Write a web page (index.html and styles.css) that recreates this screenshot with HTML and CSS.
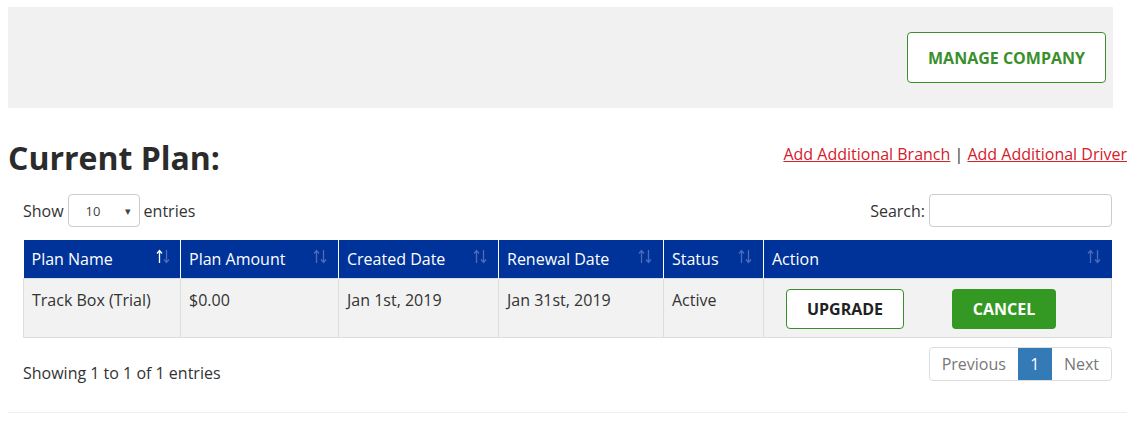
FILE: index.html
```html
<!DOCTYPE html>
<html>
<head>
    <title>Current Plan</title>
    <meta charset="utf-8">
    <meta name="viewport" content="width=device-width, initial-scale=1">
    <link rel="stylesheet" href="styles.css">
</head>
<body>
<div class="page">
    <div class="top-bar">
        <a class="btn-outline-green" href="#">Manage Company</a>
    </div>

    <div class="plan-head">
        <h2>Current Plan:</h2>
        <div class="plan-links">
            <a href="#">Add Additional Branch</a> | <a href="#">Add Additional Driver</a>
        </div>
    </div>

    <div class="table-wrap">
        <div class="table-controls">
            <label class="length">Show
                <span class="select-box">10<span class="caret">&#9662;</span></span>
                entries</label>
            <label class="search">Search: <input type="search"></label>
        </div>

        <table class="plans">
            <thead>
            <tr>
                <th class="col-name sorted">Plan Name
                    <svg class="sort" viewBox="0 0 14 15"><path class="up" d="M3.5 1.5V14M1 4.5l2.5-3 2.5 3"/><path class="down" d="M10.5 1V13.5M8 10.5l2.5 3 2.5-3"/></svg>
                </th>
                <th class="col-amount">Plan Amount
                    <svg class="sort" viewBox="0 0 14 15"><path class="up" d="M3.5 1.5V14M1 4.5l2.5-3 2.5 3"/><path class="down" d="M10.5 1V13.5M8 10.5l2.5 3 2.5-3"/></svg>
                </th>
                <th class="col-created">Created Date
                    <svg class="sort" viewBox="0 0 14 15"><path class="up" d="M3.5 1.5V14M1 4.5l2.5-3 2.5 3"/><path class="down" d="M10.5 1V13.5M8 10.5l2.5 3 2.5-3"/></svg>
                </th>
                <th class="col-renewal">Renewal Date
                    <svg class="sort" viewBox="0 0 14 15"><path class="up" d="M3.5 1.5V14M1 4.5l2.5-3 2.5 3"/><path class="down" d="M10.5 1V13.5M8 10.5l2.5 3 2.5-3"/></svg>
                </th>
                <th class="col-status">Status
                    <svg class="sort" viewBox="0 0 14 15"><path class="up" d="M3.5 1.5V14M1 4.5l2.5-3 2.5 3"/><path class="down" d="M10.5 1V13.5M8 10.5l2.5 3 2.5-3"/></svg>
                </th>
                <th class="col-action">Action
                    <svg class="sort" viewBox="0 0 14 15"><path class="up" d="M3.5 1.5V14M1 4.5l2.5-3 2.5 3"/><path class="down" d="M10.5 1V13.5M8 10.5l2.5 3 2.5-3"/></svg>
                </th>
            </tr>
            </thead>
            <tbody>
            <tr>
                <td>Track Box (Trial)</td>
                <td>$0.00</td>
                <td>Jan 1st, 2019</td>
                <td>Jan 31st, 2019</td>
                <td>Active</td>
                <td class="actions">
                    <div class="action-btns">
                        <a class="btn-upgrade" href="#">Upgrade</a>
                        <a class="btn-cancel" href="#">Cancel</a>
                    </div>
                </td>
            </tr>
            </tbody>
        </table>

        <div class="table-footer">
            <div class="info">Showing 1 to 1 of 1 entries</div>
            <div class="pager">
                <a href="#" class="disabled">Previous</a>
                <a href="#" class="current">1</a>
                <a href="#" class="disabled">Next</a>
            </div>
        </div>
    </div>

    <hr>
</div>
</body>
</html>
```

FILE: styles.css
```css
* {
    box-sizing: border-box;
}

body {
    font-family: "Open Sans", Arial, sans-serif;
    font-size: 16px;
    color: #333;
    margin: 0;
    padding: 7px 8px 0;
}

.page {
    width: 1119px;
}

.top-bar {
    width: 1105px;
    height: 101px;
    background-color: #f1f1f1;
    display: flex;
    justify-content: flex-end;
    align-items: flex-start;
    padding: 25px 7px 0 0;
}

.btn-outline-green {
    display: flex;
    align-items: center;
    justify-content: center;
    width: 199px;
    height: 51px;
    border: 1px solid #3a8f2c;
    border-radius: 4px;
    background-color: #fff;
    color: #3a8f2c;
    font-weight: bold;
    text-transform: uppercase;
    text-decoration: none;
}

.plan-head {
    display: flex;
    justify-content: space-between;
    align-items: flex-start;
    margin-top: 28px;
}

h2 {
    margin: 0;
    font-size: 32px;
    font-weight: bold;
    line-height: 44px;
    color: #2b2b2b;
}

.plan-links {
    margin-top: 7px;
    color: #333;
}

.plan-links a {
    color: #d4202c;
}

.table-wrap {
    padding: 0 15px;
}

.table-controls {
    display: flex;
    justify-content: space-between;
    align-items: center;
    margin-top: 14px;
}

.length,
.search {
    display: flex;
    align-items: center;
    gap: 4px;
}

.select-box {
    display: inline-flex;
    justify-content: space-between;
    align-items: center;
    width: 72px;
    height: 33px;
    padding: 0 8px 0 17px;
    border: 1px solid #ccc;
    border-radius: 4px;
    font-size: 13px;
    color: #444;
}

.caret {
    font-size: 11px;
}

.search input {
    width: 183px;
    height: 33px;
    border: 1px solid #ccc;
    border-radius: 4px;
}

.plans {
    width: 100%;
    border-collapse: collapse;
    margin-top: 13px;
}

.plans th {
    position: relative;
    height: 38px;
    padding: 0 8px;
    background-color: #003399;
    color: #fff;
    font-weight: normal;
    text-align: left;
    border-left: 1px solid #fff;
}

.plans th:first-child {
    border-left: none;
}

.sort {
    position: absolute;
    right: 11px;
    top: 9px;
    width: 14px;
    height: 15px;
    fill: none;
    stroke-width: 1.3;
}

.sort path {
    stroke: #4f6ab9;
}

.sorted .sort path.up {
    stroke: #fff;
}

.sorted .sort {
    right: 10px;
}

.col-name { width: 157px; }
.col-amount { width: 158px; }
.col-created { width: 160px; }
.col-renewal { width: 165px; }
.col-status { width: 100px; }

.plans td {
    height: 59px;
    padding: 10px 8px 8px;
    vertical-align: top;
    background-color: #f2f2f2;
    border: 1px solid #ddd;
}

.plans td.actions {
    padding: 10px 0 0 22px;
}

.action-btns {
    display: flex;
    gap: 48px;
}

.btn-upgrade,
.btn-cancel {
    display: flex;
    align-items: center;
    justify-content: center;
    height: 40px;
    border-radius: 4px;
    font-weight: bold;
    text-transform: uppercase;
    text-decoration: none;
}

.btn-upgrade {
    width: 118px;
    background-color: #fff;
    border: 1px solid #3a8f2c;
    color: #222;
}

.btn-cancel {
    width: 104px;
    background-color: #339922;
    color: #fff;
}

.table-footer {
    display: flex;
    justify-content: space-between;
    align-items: flex-start;
    margin-top: 9px;
}

.info {
    margin-top: 15px;
}

.pager {
    display: flex;
    border: 1px solid #ddd;
    border-radius: 4px;
    height: 34px;
}

.pager a {
    display: flex;
    align-items: center;
    justify-content: center;
    padding: 0 12px;
    text-decoration: none;
    color: #777;
}

.pager a.current {
    width: 34px;
    padding: 0;
    background-color: #337ab7;
    color: #fff;
}

hr {
    margin: 28px 0 0;
    border: none;
    border-top: 1px solid #eee;
}
```
